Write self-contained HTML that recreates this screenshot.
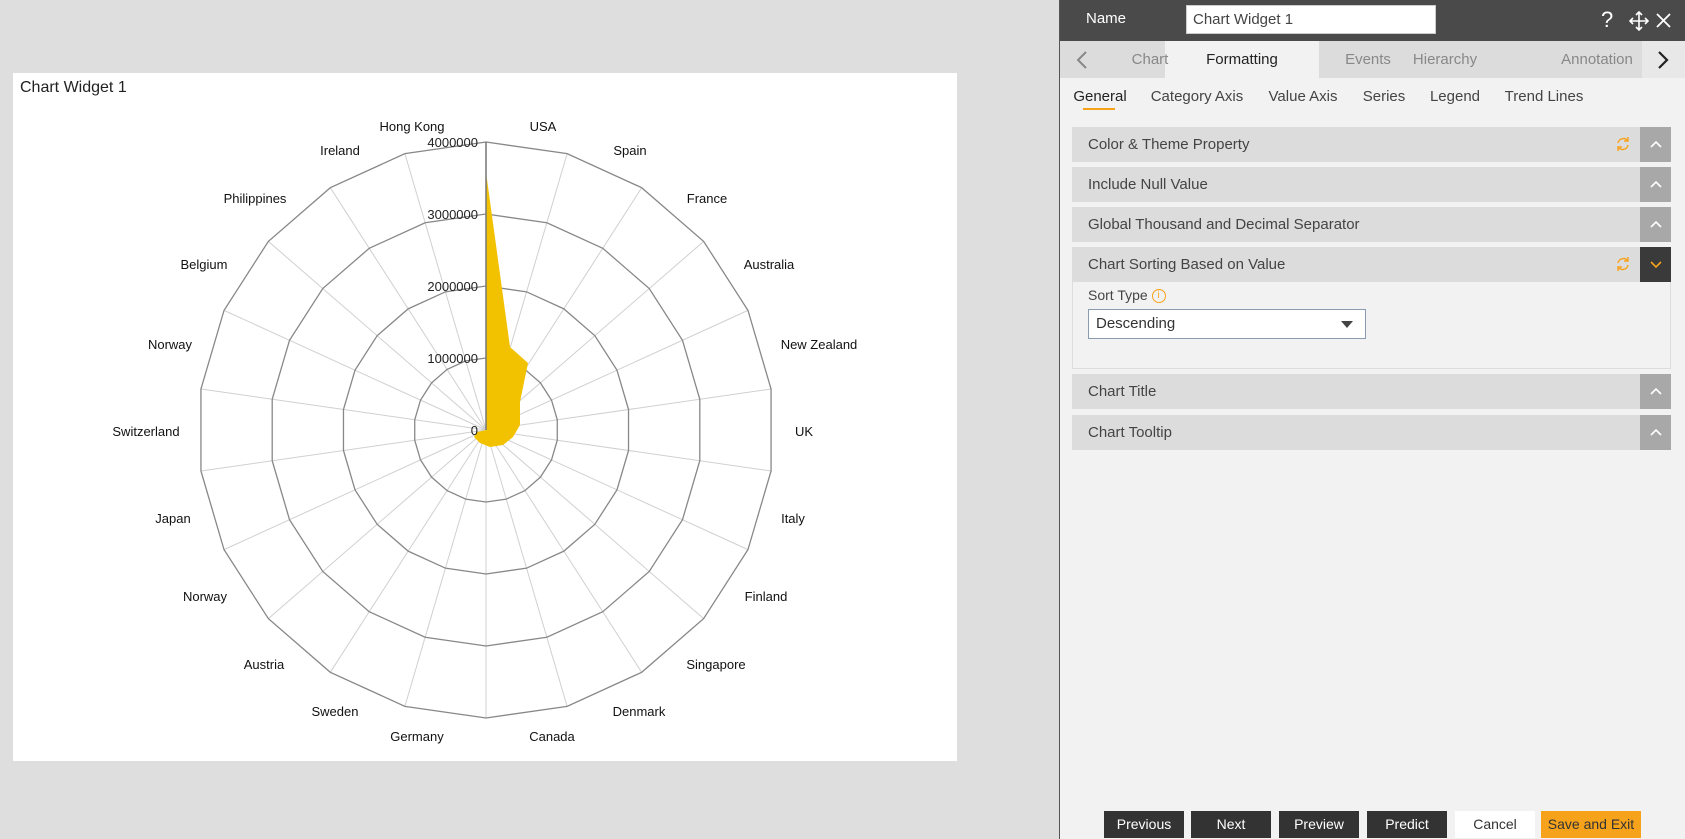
<!DOCTYPE html>
<html><head><meta charset="utf-8"><style>
*{box-sizing:border-box;margin:0;padding:0}
body{width:1685px;height:839px;background:#dedede;font-family:"Liberation Sans",Arial,sans-serif;position:relative;overflow:hidden}
.a{position:absolute}
.panel{left:1059px;top:0;width:626px;height:839px;background:#f2f2f2;border-left:1px solid #555}
.row{position:absolute;left:1072px;width:599px;height:35px;background:#dcdcdc;color:#444;font-size:15px;line-height:35px;padding-left:16px}
.row .b{position:absolute;right:0;top:0;width:31px;height:35px;background:#a8a8a8}
.row .r{position:absolute;right:40px;top:9px}
.btn{position:absolute;top:811px;height:27px;line-height:27px;text-align:center;font-size:14px;color:#fff;background:#333}
.tab{position:absolute;top:41px;height:37px;line-height:37px;font-size:15px;color:#888;transform:translateX(-50%)}
.st{position:absolute;top:88px;font-size:15px;color:#444;transform:translateX(-50%)}
</style></head><body>
<div class="a" style="left:13px;top:73px;width:944px;height:688px;background:#fff"></div>
<div class="a" style="left:20px;top:79px;font-size:16px;color:#222">Chart Widget 1</div>
<svg class="a" style="left:0;top:0" width="960" height="839" font-family="Liberation Sans,Arial,sans-serif" font-size="13">
<defs><polygon id="p" points="0,-100 28.17,-95.95 54.06,-84.13 75.57,-65.49 90.96,-41.54 98.98,-14.23 98.98,14.23 90.96,41.54 75.57,65.49 54.06,84.13 28.17,95.95 0,100 -28.17,95.95 -54.06,84.13 -75.57,65.49 -90.96,41.54 -98.98,14.23 -98.98,-14.23 -90.96,-41.54 -75.57,-65.49 -54.06,-84.13 -28.17,-95.95" fill="none" stroke="#888" stroke-width="1.3" vector-effect="non-scaling-stroke"/></defs>
<g transform="translate(486,430) scale(2.88)">
<path d="M0 0L0 -100M0 0L28.17 -95.95M0 0L54.06 -84.13M0 0L75.57 -65.49M0 0L90.96 -41.54M0 0L98.98 -14.23M0 0L98.98 14.23M0 0L90.96 41.54M0 0L75.57 65.49M0 0L54.06 84.13M0 0L28.17 95.95M0 0L0 100M0 0L-28.17 95.95M0 0L-54.06 84.13M0 0L-75.57 65.49M0 0L-90.96 41.54M0 0L-98.98 14.23M0 0L-98.98 -14.23M0 0L-90.96 -41.54M0 0L-75.57 -65.49M0 0L-54.06 -84.13M0 0L-28.17 -95.95" stroke="#d0d0d0" stroke-width="1" vector-effect="non-scaling-stroke"/>
</g>
<g transform="translate(486,430)">
<use href="#p" transform="scale(0.72)"/><use href="#p" transform="scale(1.44)"/><use href="#p" transform="scale(2.16)"/><use href="#p" transform="scale(2.88)"/>
</g>
<polygon points="486,172 510,347 528,363 520,402 520,425 513,437 503,445 490,447 480,443 474,437 477,432 486,430" fill="#f2c200"/>
<line x1="486" y1="142" x2="486" y2="430" stroke="#777" stroke-width="1.5"/>
<g text-anchor="end" fill="#222"><text x="478" y="147">4000000</text><text x="478" y="219">3000000</text><text x="478" y="291">2000000</text><text x="478" y="363">1000000</text><text x="478" y="435">0</text></g>
<g text-anchor="middle" fill="#111">
<text x="412" y="131">Hong Kong</text><text x="543" y="131">USA</text><text x="340" y="155">Ireland</text><text x="630" y="155">Spain</text>
<text x="255" y="203">Philippines</text><text x="707" y="203">France</text><text x="204" y="269">Belgium</text><text x="769" y="269">Australia</text>
<text x="170" y="349">Norway</text><text x="819" y="349">New Zealand</text><text x="146" y="436">Switzerland</text><text x="804" y="436">UK</text>
<text x="173" y="523">Japan</text><text x="793" y="523">Italy</text><text x="205" y="601">Norway</text><text x="766" y="601">Finland</text>
<text x="264" y="669">Austria</text><text x="716" y="669">Singapore</text><text x="335" y="716">Sweden</text><text x="639" y="716">Denmark</text>
<text x="417" y="741">Germany</text><text x="552" y="741">Canada</text></g>
</svg>

<div class="a panel"></div>
<div class="a" style="left:1060px;top:0;width:625px;height:41px;background:#4a4a4a"></div>
<div class="a" style="left:1086px;top:10px;color:#fff;font-size:15px">Name</div>
<div class="a" style="left:1186px;top:5px;width:250px;height:29px;background:#fff;border:1px solid #ccc;font-size:15px;color:#444;line-height:27px;padding-left:6px">Chart Widget 1</div>
<div class="a" style="left:1601px;top:7px;color:#fff;font-size:22px">?</div>
<svg class="a" style="left:1629px;top:11px" width="20" height="20" fill="none" stroke="#fff" stroke-width="1.6"><path d="M10 1V19M1 10H19M7 4L10 1L13 4M7 16L10 19L13 16M4 7L1 10L4 13M16 7L19 10L16 13"/></svg>
<svg class="a" style="left:1656px;top:13px" width="15" height="15" stroke="#fff" stroke-width="1.8"><path d="M1 1L14 14M14 1L1 14"/></svg>
<div class="a" style="left:1060px;top:41px;width:625px;height:37px;background:#dcdcdc"></div>
<div class="a" style="left:1165px;top:41px;width:154px;height:37px;background:#f2f2f2"></div>
<div class="a" style="left:1642px;top:41px;width:43px;height:37px;background:#e8e8e8"></div>
<svg class="a" style="left:1075px;top:50px" width="14" height="20" fill="none" stroke="#888" stroke-width="2"><path d="M11 2L3 10L11 18"/></svg>
<svg class="a" style="left:1656px;top:50px" width="14" height="20" fill="none" stroke="#222" stroke-width="2.2"><path d="M3 2L11 10L3 18"/></svg>
<div class="tab" style="left:1150px">Chart</div><div class="tab" style="left:1242px;color:#222">Formatting</div><div class="tab" style="left:1368px">Events</div><div class="tab" style="left:1445px">Hierarchy</div><div class="tab" style="left:1597px">Annotation</div>
<div class="st" style="left:1100px;color:#222">General</div><div class="st" style="left:1197px">Category Axis</div><div class="st" style="left:1303px">Value Axis</div><div class="st" style="left:1384px">Series</div><div class="st" style="left:1455px">Legend</div><div class="st" style="left:1544px">Trend Lines</div>
<div class="a" style="left:1083px;top:108px;width:32px;height:2px;background:#f7a21b"></div>
<div class="row" style="top:127px">Color &amp; Theme Property<svg class="r" width="16" height="16" fill="none" stroke="#f7a21b" stroke-width="1.4"><path d="M3 7A5.5 5.5 0 0 1 13 5M13 1V5H9M13 9A5.5 5.5 0 0 1 3 11M3 15V11H7"/></svg><div class="b"><svg width="31" height="35" fill="none" stroke="#fff" stroke-width="1.6"><path d="M11 20L16 15L21 20"/></svg></div></div>
<div class="row" style="top:167px">Include Null Value<div class="b"><svg width="31" height="35" fill="none" stroke="#fff" stroke-width="1.6"><path d="M11 20L16 15L21 20"/></svg></div></div>
<div class="row" style="top:207px">Global Thousand and Decimal Separator<div class="b"><svg width="31" height="35" fill="none" stroke="#fff" stroke-width="1.6"><path d="M11 20L16 15L21 20"/></svg></div></div>
<div class="row" style="top:247px">Chart Sorting Based on Value<svg class="r" width="16" height="16" fill="none" stroke="#f7a21b" stroke-width="1.4"><path d="M3 7A5.5 5.5 0 0 1 13 5M13 1V5H9M13 9A5.5 5.5 0 0 1 3 11M3 15V11H7"/></svg><div class="b" style="background:#3a3a3a"><svg width="31" height="35" fill="none" stroke="#f7a21b" stroke-width="1.6"><path d="M11 15L16 20L21 15"/></svg></div></div>
<div class="a" style="left:1072px;top:282px;width:599px;height:87px;border:1px solid #ddd;border-top:none;background:#f2f2f2"></div>
<div class="a" style="left:1088px;top:287px;font-size:14px;color:#444">Sort Type <span style="display:inline-block;width:14px;height:14px;border:1px solid #f7a21b;border-radius:50%;color:#f7a21b;font-size:10px;text-align:center;line-height:12px;vertical-align:middle">i</span></div>
<div class="a" style="left:1088px;top:309px;width:278px;height:30px;background:#fff;border:1px solid #8a9bb0;font-size:15px;color:#333;line-height:28px;padding-left:7px">Descending<svg style="position:absolute;right:12px;top:11px" width="12" height="7"><path d="M0 0H12L6 7Z" fill="#444"/></svg></div>
<div class="row" style="top:374px">Chart Title<div class="b"><svg width="31" height="35" fill="none" stroke="#fff" stroke-width="1.6"><path d="M11 20L16 15L21 20"/></svg></div></div>
<div class="row" style="top:415px">Chart Tooltip<div class="b"><svg width="31" height="35" fill="none" stroke="#fff" stroke-width="1.6"><path d="M11 20L16 15L21 20"/></svg></div></div>
<div class="btn" style="left:1104px;width:80px">Previous</div>
<div class="btn" style="left:1191px;width:80px">Next</div>
<div class="btn" style="left:1279px;width:80px">Preview</div>
<div class="btn" style="left:1367px;width:80px">Predict</div>
<div class="btn" style="left:1455px;width:80px;background:#fff;color:#333">Cancel</div>
<div class="btn" style="left:1541px;width:100px;background:#f7a21b;color:#333">Save and Exit</div>
</body></html>
